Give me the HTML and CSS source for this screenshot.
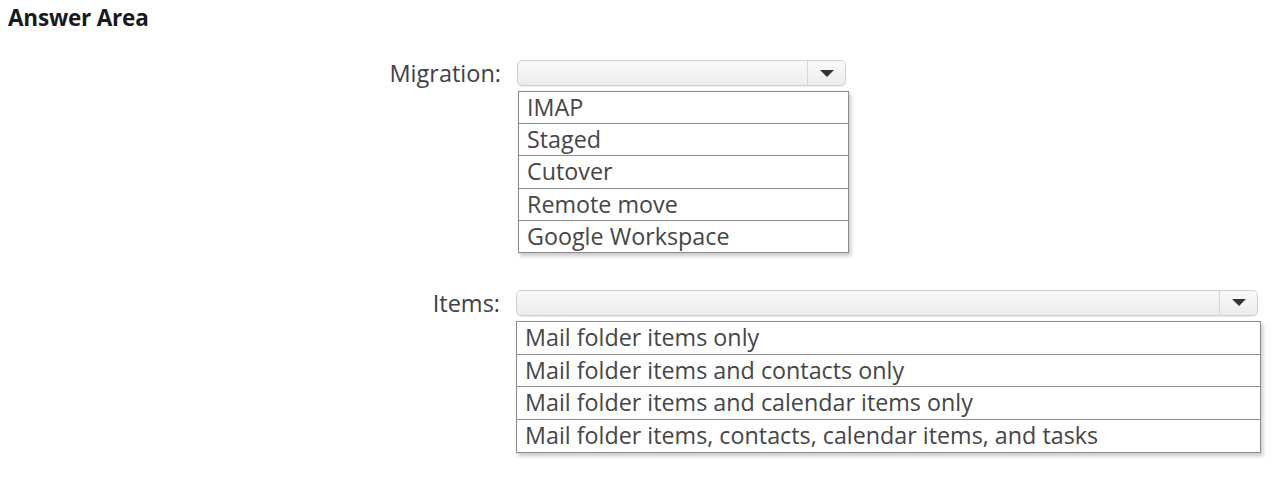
FILE: index.html
```html
<!DOCTYPE html>
<html>
<head>
<meta charset="utf-8">
<link rel="stylesheet" href="styles.css">
</head>
<body>
<h1 class="title">Answer Area</h1>
<div class="form">
  <div class="field field-migration">
    <div class="label">Migration:</div>
    <div class="control">
      <div class="select">
        <div class="select-value"></div>
        <div class="select-btn"><span class="arrow"></span></div>
      </div>
      <ul class="list">
        <li>IMAP</li>
        <li>Staged</li>
        <li>Cutover</li>
        <li>Remote move</li>
        <li>Google Workspace</li>
      </ul>
    </div>
  </div>
  <div class="field field-items">
    <div class="label">Items:</div>
    <div class="control">
      <div class="select">
        <div class="select-value"></div>
        <div class="select-btn"><span class="arrow"></span></div>
      </div>
      <ul class="list">
        <li>Mail folder items only</li>
        <li>Mail folder items and contacts only</li>
        <li>Mail folder items and calendar items only</li>
        <li>Mail folder items, contacts, calendar items, and tasks</li>
      </ul>
    </div>
  </div>
</div>
</body>
</html>
```
FILE: styles.css
```css
html, body {
  margin: 0;
  padding: 0;
  background: #ffffff;
}
body {
  width: 1284px;
  height: 477px;
  overflow: hidden;
  font-family: "Open Sans", "Noto Sans", sans-serif;
  color: #3a3a3a;
}
.title {
  margin: 0;
  padding: 4px 0 0 8px;
  font-family: "Open Sans", sans-serif;
  font-weight: 700;
  font-size: 22.5px;
  line-height: 28px;
  color: #1a1a1a;
  letter-spacing: -0.2px;
}
.form {
  display: flex;
  flex-direction: column;
  padding-top: 28px;
}
.field {
  display: flex;
  align-items: flex-start;
}
.field-items {
  margin-top: 37px;
}
.label {
  text-align: right;
  font-size: 23.5px;
  line-height: 26px;
  color: #404048;
  padding-right: 16px;
  box-sizing: border-box;
}
.field-migration .label { width: 517px; }
.field-items .label { width: 516px; }
.select {
  display: flex;
  height: 26px;
  box-sizing: border-box;
  border: 1px solid #cfcfcf;
  border-radius: 5px;
  background: linear-gradient(#fafafa, #ececec);
  box-shadow: 0 1px 1px rgba(0,0,0,0.08);
}
.select-value {
  flex: 1;
}
.select-btn {
  width: 37px;
  border-left: 1px solid #d6d6d6;
  display: flex;
  align-items: center;
  justify-content: center;
}
.arrow {
  width: 0;
  height: 0;
  border-left: 7px solid transparent;
  border-right: 7px solid transparent;
  border-top: 7px solid #333;
}
.field-migration .select { width: 329px; }
.field-items .select { width: 742px; }
.list {
  list-style: none;
  margin: 5px 0 0 0;
  padding: 0;
  border: 1px solid #8c8c8c;
  background: #fff;
  box-shadow: 2px 3px 4px rgba(0,0,0,0.22);
}
.field-migration .list { width: 329px; margin-left: 1px; }
.field-items .list { width: 743px; }
.list li {
  height: 31.2px;
  line-height: 31px;
  padding-left: 8px;
  font-size: 23.3px;
  color: #464646;
  border-top: 1px solid #8c8c8c;
  white-space: nowrap;
}
.field-items .list li { height: 31.75px; line-height: 31px; }
.list li:first-child {
  border-top: none;
}
```
